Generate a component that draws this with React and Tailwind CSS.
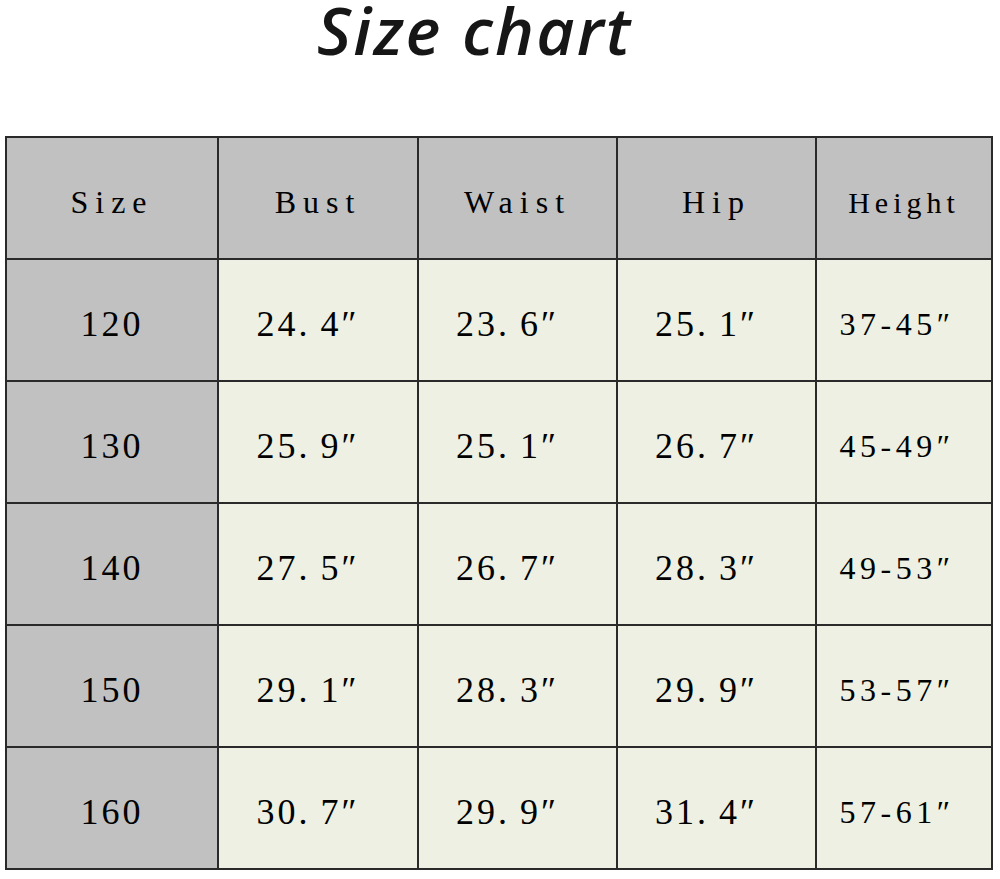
const HEADERS = ['Size', 'Bust', 'Waist', 'Hip', 'Height'];

const ROWS = [
    ['120', '24.4″', '23.6″', '25.1″', '37-45″'],
    ['130', '25.9″', '25.1″', '26.7″', '45-49″'],
    ['140', '27.5″', '26.7″', '28.3″', '49-53″'],
    ['150', '29.1″', '28.3″', '29.9″', '53-57″'],
    ['160', '30.7″', '29.9″', '31.4″', '57-61″'],
];

const WIDTHS = ['w-[212px]', 'w-[200px]', 'w-[199px]', 'w-[199px]', 'w-[176px]'];

function Value({ text }) {
    const [a, b] = text.split('.');
    if (b === undefined) return text;
    return (
        <>
            {a}<span className="inline-block w-[22px] text-left">.</span>{b}
        </>
    );
}

function cellClass(i) {
    if (i === 0) return 'bg-[#c1c1c1] text-[36px] tracking-[3px]';
    if (i === 4) return 'bg-[#edf0e2] text-[32px] tracking-[4.5px] pr-[14px]';
    return 'bg-[#edf0e2] text-[36px] tracking-[3px] pr-[20px]';
}

export default function App() {
    return (
        <div className="w-[1000px] h-[879px] bg-white">
            <h1 className="h-[136px] pl-[317px] text-[66px] leading-[58px] italic font-semibold text-[#161616] font-['Open_Sans',sans-serif] tracking-[2.2px]">
                Size chart
            </h1>

            <table className="ml-[5px] border-collapse table-fixed font-['Liberation_Serif',serif] text-black">
                <thead>
                    <tr className="h-[122px]">
                        {HEADERS.map((h, i) => (
                            <th
                                key={h}
                                className={`${WIDTHS[i]} border-2 border-[#2a2a2a] bg-[#c1c1c1] font-normal pt-2 ${i === 4 ? 'text-[30px] tracking-[5px]' : 'text-[32px] tracking-[7px]'}`}
                            >
                                {h}
                            </th>
                        ))}
                    </tr>
                </thead>
                <tbody>
                    {ROWS.map(row => (
                        <tr key={row[0]} className="h-[122px]">
                            {row.map((v, i) => (
                                <td key={i} className={`border-2 border-[#2a2a2a] text-center pt-2 ${cellClass(i)}`}>
                                    <Value text={v} />
                                </td>
                            ))}
                        </tr>
                    ))}
                </tbody>
            </table>
        </div>
    );
}
